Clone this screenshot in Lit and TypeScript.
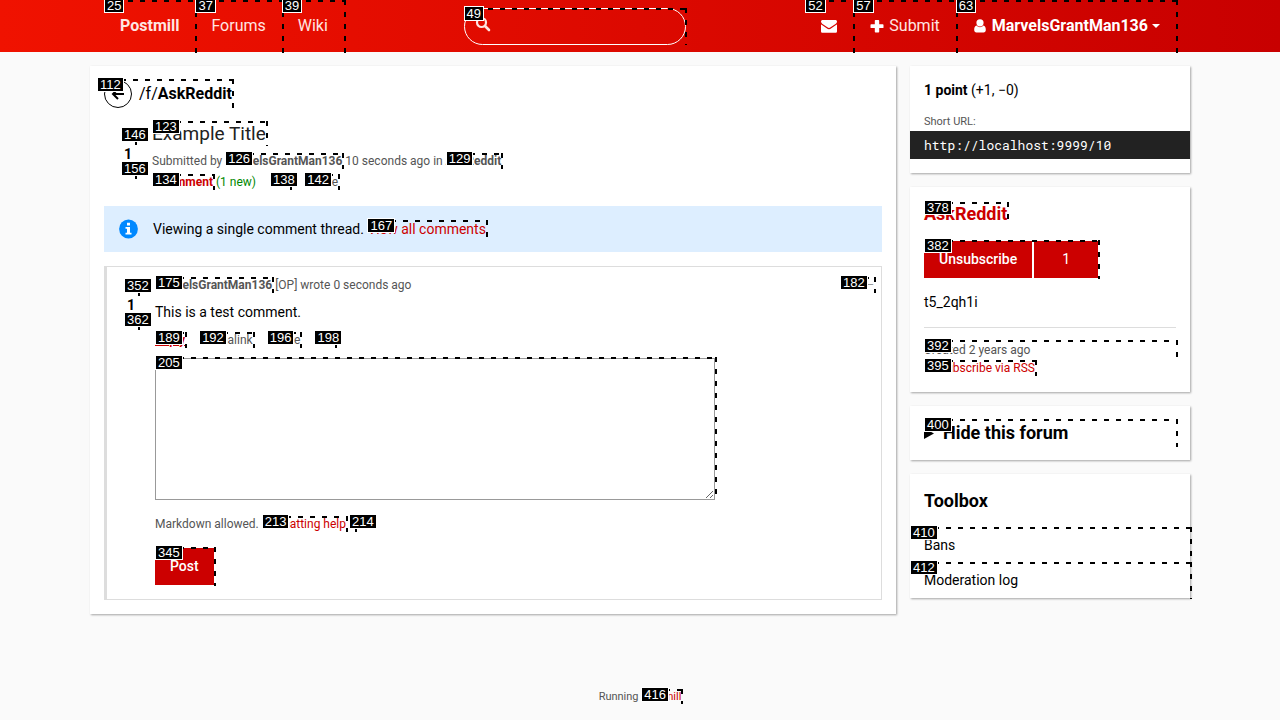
import { LitElement, html, css, svg } from "lit";
import { customElement } from "lit/decorators.js";

/* Numbered outline drawn over an interactive element. */
const mark = (id: number) =>
  html`<span class="mark" aria-hidden="true"><span class="tag">${id}</span></span>`;

const icon = (box: string, body: unknown, cls = "icon") =>
  html`<svg class=${cls} viewBox=${box} aria-hidden="true">${body}</svg>`;

const envelope = svg`<path fill="currentColor" d="M0 3.6C0 2.6.7 2 1.6 2h12.8c.9 0 1.6.6 1.6 1.5 0 1-.7 1.900-1.500 2.500L9.600 9.300C9 9.700 8.500 10 8 10s-1-.3-1.600-.7L1.500 6C.8 5.500 0 4.500 0 3.600zM0 6.200c.3.3.6.6 1 .8l4.700 3.300c.7.5 1.500 1 2.300 1s1.600-.5 2.300-1L15 7c.4-.2.7-.5 1-.8v7c0 .9-.7 1.600-1.600 1.600H1.600C.7 14.800 0 14.100 0 13.200z"/>`;
const plus = svg`<path fill="#fff" d="M6.500 2h3c.4 0 .7.3.7.7v3.600h3.600c.4 0 .7.3.7.7v2.400c0 .4-.3.7-.7.7h-3.600v3.600c0 .4-.3.7-.7.7h-3c-.4 0-.7-.3-.7-.7v-3.600H2.200c-.4 0-.7-.3-.7-.7V7c0-.4.3-.7.7-.7h3.600V2.700c0-.4.3-.7.7-.7z"/>`;
const user = svg`<path fill="currentColor" d="M8 1.200a3.500 3.500 0 0 1 0 7.200 3.500 3.500 0 0 1 0-7.200zM4.700 7.600C5.500 8.500 6.700 9.200 8 9.200s2.500-.7 3.300-1.600c1.900.2 2.500 2.300 2.500 4.400 0 1.500-.9 2.500-2.200 2.500H4.400c-1.300 0-2.200-1-2.200-2.500 0-2.100.6-4.200 2.500-4.400z"/>`;
const magnifier = svg`<circle cx="6.500" cy="6.500" r="4.500" fill="none" stroke="currentColor" stroke-width="2.200"/><path d="M10 10l4 4" stroke="currentColor" stroke-width="2.600" stroke-linecap="round"/>`;
const caret = svg`<path fill="currentColor" d="M0 1h8L4 5z"/>`;
const backArrow = svg`<circle cx="14" cy="14" r="13.500" fill="none" stroke="currentColor"/><path d="M20 14H9.500M14 9l-5 5 5 5" fill="none" stroke="currentColor" stroke-width="2"/>`;
const info = svg`<circle cx="10" cy="10" r="9.400" fill="#08f"/><path fill="#fff" d="M8.500 3.800h3v2.600h-3zM7 8h4.500v5.800H13v1.800H7v-1.800h1.500V9.800H7z"/>`;
const up = svg`<path fill="#f80" d="M7 2l5 5H9v5H5V7H2z"/>`;
const down = svg`<path fill="#999" d="M7 12L2 7h3V2h4v5h3z"/>`;
const triangle = svg`<path fill="currentColor" d="M0 0l10 5.500L0 11z"/>`;
const rss = svg`<circle cx="2.500" cy="9.500" r="1.500" fill="currentColor"/><path d="M1 5a6 6 0 0 1 6 6M1 1.500A9.500 9.500 0 0 1 10.500 11" fill="none" stroke="currentColor" stroke-width="1.600"/>`;

@customElement("app-root")
export class AppRoot extends LitElement {
  static styles = css`
    :host {
      display: flex;
      flex-direction: column;
      min-height: 100vh;
      background: #fafafa;
      color: #000;
      font: 14px/21px Roboto, sans-serif;
    }
    * { box-sizing: border-box; }
    h1, h2, p, ul { margin: 0; padding: 0; }
    ul { list-style: none; }
    a { color: #c00; text-decoration: none; }
    button { font: inherit; border: 0; padding: 0; margin: 0; background: none; color: inherit; }
    svg { display: block; flex: none; }
    .icon { width: 16px; height: 16px; }
    .marked { position: relative; }
    .mark {
      position: absolute;
      z-index: 1;
      inset: -1px -2px -1px 0;
      pointer-events: none;
      background:
        repeating-linear-gradient(90deg, #000 0 5px, transparent 5px 12px) top / 100% 2px no-repeat,
        repeating-linear-gradient(180deg, #000 0 5px, transparent 5px 12px) right / 2px 100% no-repeat;
    }
    .tag {
      position: absolute;
      top: -2px;
      left: 0;
      padding: 0 2px;
      border: 1px solid #fff;
      background: #000;
      color: #fff;
      font: 400 13px/13px "Liberation Sans", sans-serif;
      white-space: nowrap;
    }

    .top { background: linear-gradient(to right, #f01200, #c80000); color: #fff; }
    .wrap { width: 100%; max-width: 1128px; margin: 0 auto; padding: 0 14px; }
    .bar { display: flex; align-items: center; justify-content: space-between; padding: 0 28px; }
    .bar .mark { top: 0; }
    .group { display: flex; }
    .nav { display: flex; align-items: center; gap: 4px; padding: 16px; color: #fff; font-size: 16px; line-height: 20px; }
    .soft { color: #ffe5e2; }
    .strong { font-weight: 700; }
    .caret { width: 8px; height: 6px; }
    .search { display: flex; align-items: center; width: 222px; height: 37px; padding: 0 10px; gap: 8px; border: 1px solid #fff; border-radius: 19px; color: #ffe5e2; }
    .search .icon { margin-bottom: 4px; }
    .search .mark { inset: -1px -2px -1px -1px; }
    .query { flex: 1; min-width: 0; border: 0; padding: 0; background: none; color: #fff; font: inherit; outline: 0; }

    .page { display: flex; align-items: flex-start; gap: 14px; padding-top: 14px; }
    .card { background: #fff; padding: 14px; box-shadow: 1px 1px 2px rgba(0, 0, 0, 0.35); }
    .main { flex: 1; min-width: 0; }
    .side { display: flex; flex-direction: column; gap: 14px; width: 280px; flex: none; }

    .crumb { display: inline-flex; align-items: center; gap: 7px; margin-left: -7px; padding-left: 7px; color: #000; font-size: 16px; line-height: 28px; vertical-align: top; }
    .back { width: 28px; height: 28px; }
    .entry { display: flex; }
    .post { margin: 12px 0 15px; }
    .body { flex: 1; min-width: 0; }
    .votes { display: flex; flex-direction: column; align-items: center; width: 48px; flex: none; font-weight: 700; line-height: 20px; }
    .post .votes { padding-top: 10px; }
    .comment .votes { padding-top: 14px; }
    .vote { display: block; width: 14px; height: 14px; }
    .vote svg { width: 14px; height: 14px; }
    .title { font-size: 19px; font-weight: 400; line-height: 28px; }
    .title a { color: #222; }
    .meta { color: #555; font-size: 12px; line-height: 18px; }
    .author { color: #555; font-weight: 700; }
    .post .meta { margin-top: 4px; }
    .actions { display: flex; gap: 14px; font-size: 12px; line-height: 14px; padding: 2px 0; }
    .actions a { color: #555; }
    .post .actions { margin-top: 3px; }
    .actions .red { color: #c00; font-weight: 700; }
    .active { text-decoration: underline; }
    .new { color: #080; }

    .alert { display: flex; align-items: center; gap: 14px; min-height: 46px; padding: 0 14px; background: #def; }
    .info { width: 21px; height: 20px; }

    .comment { margin-top: 14px; border: 1px solid #ddd; border-left-width: 3px; }
    .comment .body { padding: 9px 7px 14px 0; }
    .line { display: flex; justify-content: space-between; align-items: center; }
    .fold { width: 34px; text-align: right; color: #999; font-size: 12px; line-height: 14px; }
    .text { margin: 8px 0; }
    .area { position: relative; max-width: 560px; margin-top: 9px; }
    .input { display: block; width: 100%; height: 142px; border: 1px solid #999; background: #fff; font: inherit; padding: 7px; resize: both; outline: 0; }
    .help { margin: 15px 0; }
    .btn { position: relative; display: inline-flex; background: #c00; color: #fff; font-weight: 500; vertical-align: top; }
    .part { padding: 8px 15px; }
    .count { min-width: 66px; border-left: 2px solid #fff; font-weight: 400; }

    .note { display: block; margin-top: 12px; color: #555; font-size: 11px; line-height: 18px; }
    .url { display: block; width: calc(100% + 28px); margin: 0 -14px; padding: 0 14px; border: 0; height: 28px; background: #222; color: #fff; font: 13px/28px "Roboto Mono", "DejaVu Sans Mono", monospace; outline: 0; }
    .head { font-size: 18px; line-height: 26px; font-weight: 700; }
    .gap { margin-top: 14px; }
    .rule { margin-top: 14px; padding: 13px 0 1px; border-top: 1px solid #ddd; }
    .feeds { display: flex; align-items: center; height: 18px; }
    .feed { display: flex; align-items: center; gap: 3px; line-height: 14px; }
    .rss { width: 12px; height: 12px; }
    .hide { display: flex; align-items: center; gap: 9px; list-style: none; }
    .hide::-webkit-details-marker { display: none; }
    .tri { width: 10px; height: 11px; }
    .tools { padding-bottom: 0; }
    .list { margin: 14px -14px 0; }
    .list a { display: block; padding: 7px 14px; color: #000; }
    .foot { margin-top: auto; padding: 14px; text-align: center; color: #555; font-size: 11px; line-height: 18px; }
  `;

  render() {
    return html`
      <header class="top">
        <div class="wrap bar">
          <nav class="group">
            <a class="nav marked soft strong" href="#">Postmill${mark(25)}</a>
            <a class="nav marked soft" href="#">Forums${mark(37)}</a>
            <a class="nav marked soft" href="#">Wiki${mark(39)}</a>
          </nav>
          <label class="search marked">
            ${icon("0 0 16 16", magnifier)}
            <input class="query" type="search" aria-label="Search" />${mark(49)}
          </label>
          <nav class="group">
            <a class="nav marked" href="#" aria-label="Messages">${icon("0 0 16 16", envelope)}${mark(52)}</a>
            <a class="nav marked soft" href="#">${icon("0 0 16 16", plus)}<span>Submit</span>${mark(57)}</a>
            <button class="nav marked strong" type="button">${icon("0 0 16 16", user)}<span>MarvelsGrantMan136</span>${icon("0 0 8 6", caret, "caret")}${mark(63)}</button>
          </nav>
        </div>
      </header>

      <div class="wrap page">
        <main class="card main">
          <a class="crumb marked" href="#">${icon("0 0 28 28", backArrow, "back")}<span>/f/<b>AskReddit</b></span>${mark(112)}</a>

          <article class="entry post">
            <div class="votes">
              <button class="vote marked" type="button" aria-label="Upvote">${icon("0 0 14 14", up)}${mark(146)}</button>
              <span>1</span>
              <button class="vote marked" type="button" aria-label="Downvote">${icon("0 0 14 14", down)}${mark(156)}</button>
            </div>
            <div class="body">
              <h1 class="title"><a class="marked" href="#">Example Title${mark(123)}</a></h1>
              <p class="meta">Submitted by <a class="author marked" href="#">MarvelsGrantMan136${mark(126)}</a> 10 seconds ago in <a class="author marked" href="#">AskReddit${mark(129)}</a></p>
              <div class="actions">
                <span><a class="red marked" href="#">1 comment${mark(134)}</a> <span class="new">(1 new)</span></span>
                <a class="marked" href="#">Edit${mark(138)}</a>
                <a class="marked" href="#">Delete${mark(142)}</a>
              </div>
            </div>
          </article>

          <div class="alert">
            ${icon("0 0 20 20", info, "info")}
            <p>Viewing a single comment thread. <a class="marked" href="#">View all comments${mark(167)}</a></p>
          </div>

          <article class="entry comment">
            <div class="votes">
              <button class="vote marked" type="button" aria-label="Upvote">${icon("0 0 14 14", up)}${mark(352)}</button>
              <span>1</span>
              <button class="vote marked" type="button" aria-label="Downvote">${icon("0 0 14 14", down)}${mark(362)}</button>
            </div>
            <div class="body">
              <div class="line">
                <p class="meta"><a class="author marked" href="#">MarvelsGrantMan136${mark(175)}</a> [OP] wrote 0 seconds ago</p>
                <button class="fold marked" type="button" aria-label="Collapse">–${mark(182)}</button>
              </div>
              <p class="text">This is a test comment.</p>
              <div class="actions">
                <a class="marked red active" href="#">Reply${mark(189)}</a>
                <a class="marked" href="#">Permalink${mark(192)}</a>
                <a class="marked" href="#">Delete${mark(196)}</a>
                <a class="marked" href="#">Edit${mark(198)}</a>
              </div>
              <form>
                <div class="area"><textarea class="input" aria-label="Comment"></textarea>${mark(205)}</div>
                <p class="meta help">Markdown allowed. <a class="marked" href="#">Formatting help${mark(213)}</a> <a class="marked" href="#">?${mark(214)}</a></p>
                <button class="btn" type="button"><span class="part">Post</span>${mark(345)}</button>
              </form>
            </div>
          </article>
        </main>

        <aside class="side">
          <section class="card">
            <p><b>1 point</b> (+1, −0)</p>
            <label class="note" for="short">Short URL:</label>
            <input class="url" id="short" readonly .value=${"http://localhost:9999/10"} />
          </section>

          <section class="card">
            <h2 class="head"><a class="marked" href="#">AskReddit${mark(378)}</a></h2>
            <div class="gap">
              <button class="btn" type="button"><span class="part">Unsubscribe</span><span class="part count">1</span>${mark(382)}</button>
            </div>
            <p class="gap">t5_2qh1i</p>
            <div class="rule meta">
              <p class="marked">Created 2 years ago${mark(392)}</p>
              <p class="feeds"><a class="marked feed" href="#">${icon("0 0 12 12", rss, "rss")}<span>Subscribe via RSS</span>${mark(395)}</a></p>
            </div>
          </section>

          <section class="card">
            <details>
              <summary class="hide head marked">${icon("0 0 10 11", triangle, "tri")}<span>Hide this forum</span>${mark(400)}</summary>
            </details>
          </section>

          <section class="card tools">
            <h2 class="head">Toolbox</h2>
            <ul class="list">
              <li><a class="marked" href="#">Bans${mark(410)}</a></li>
              <li><a class="marked" href="#">Moderation log${mark(412)}</a></li>
            </ul>
          </section>
        </aside>
      </div>

      <footer class="foot">Running <a class="marked" href="#">Postmill${mark(416)}</a></footer>
    `;
  }
}
